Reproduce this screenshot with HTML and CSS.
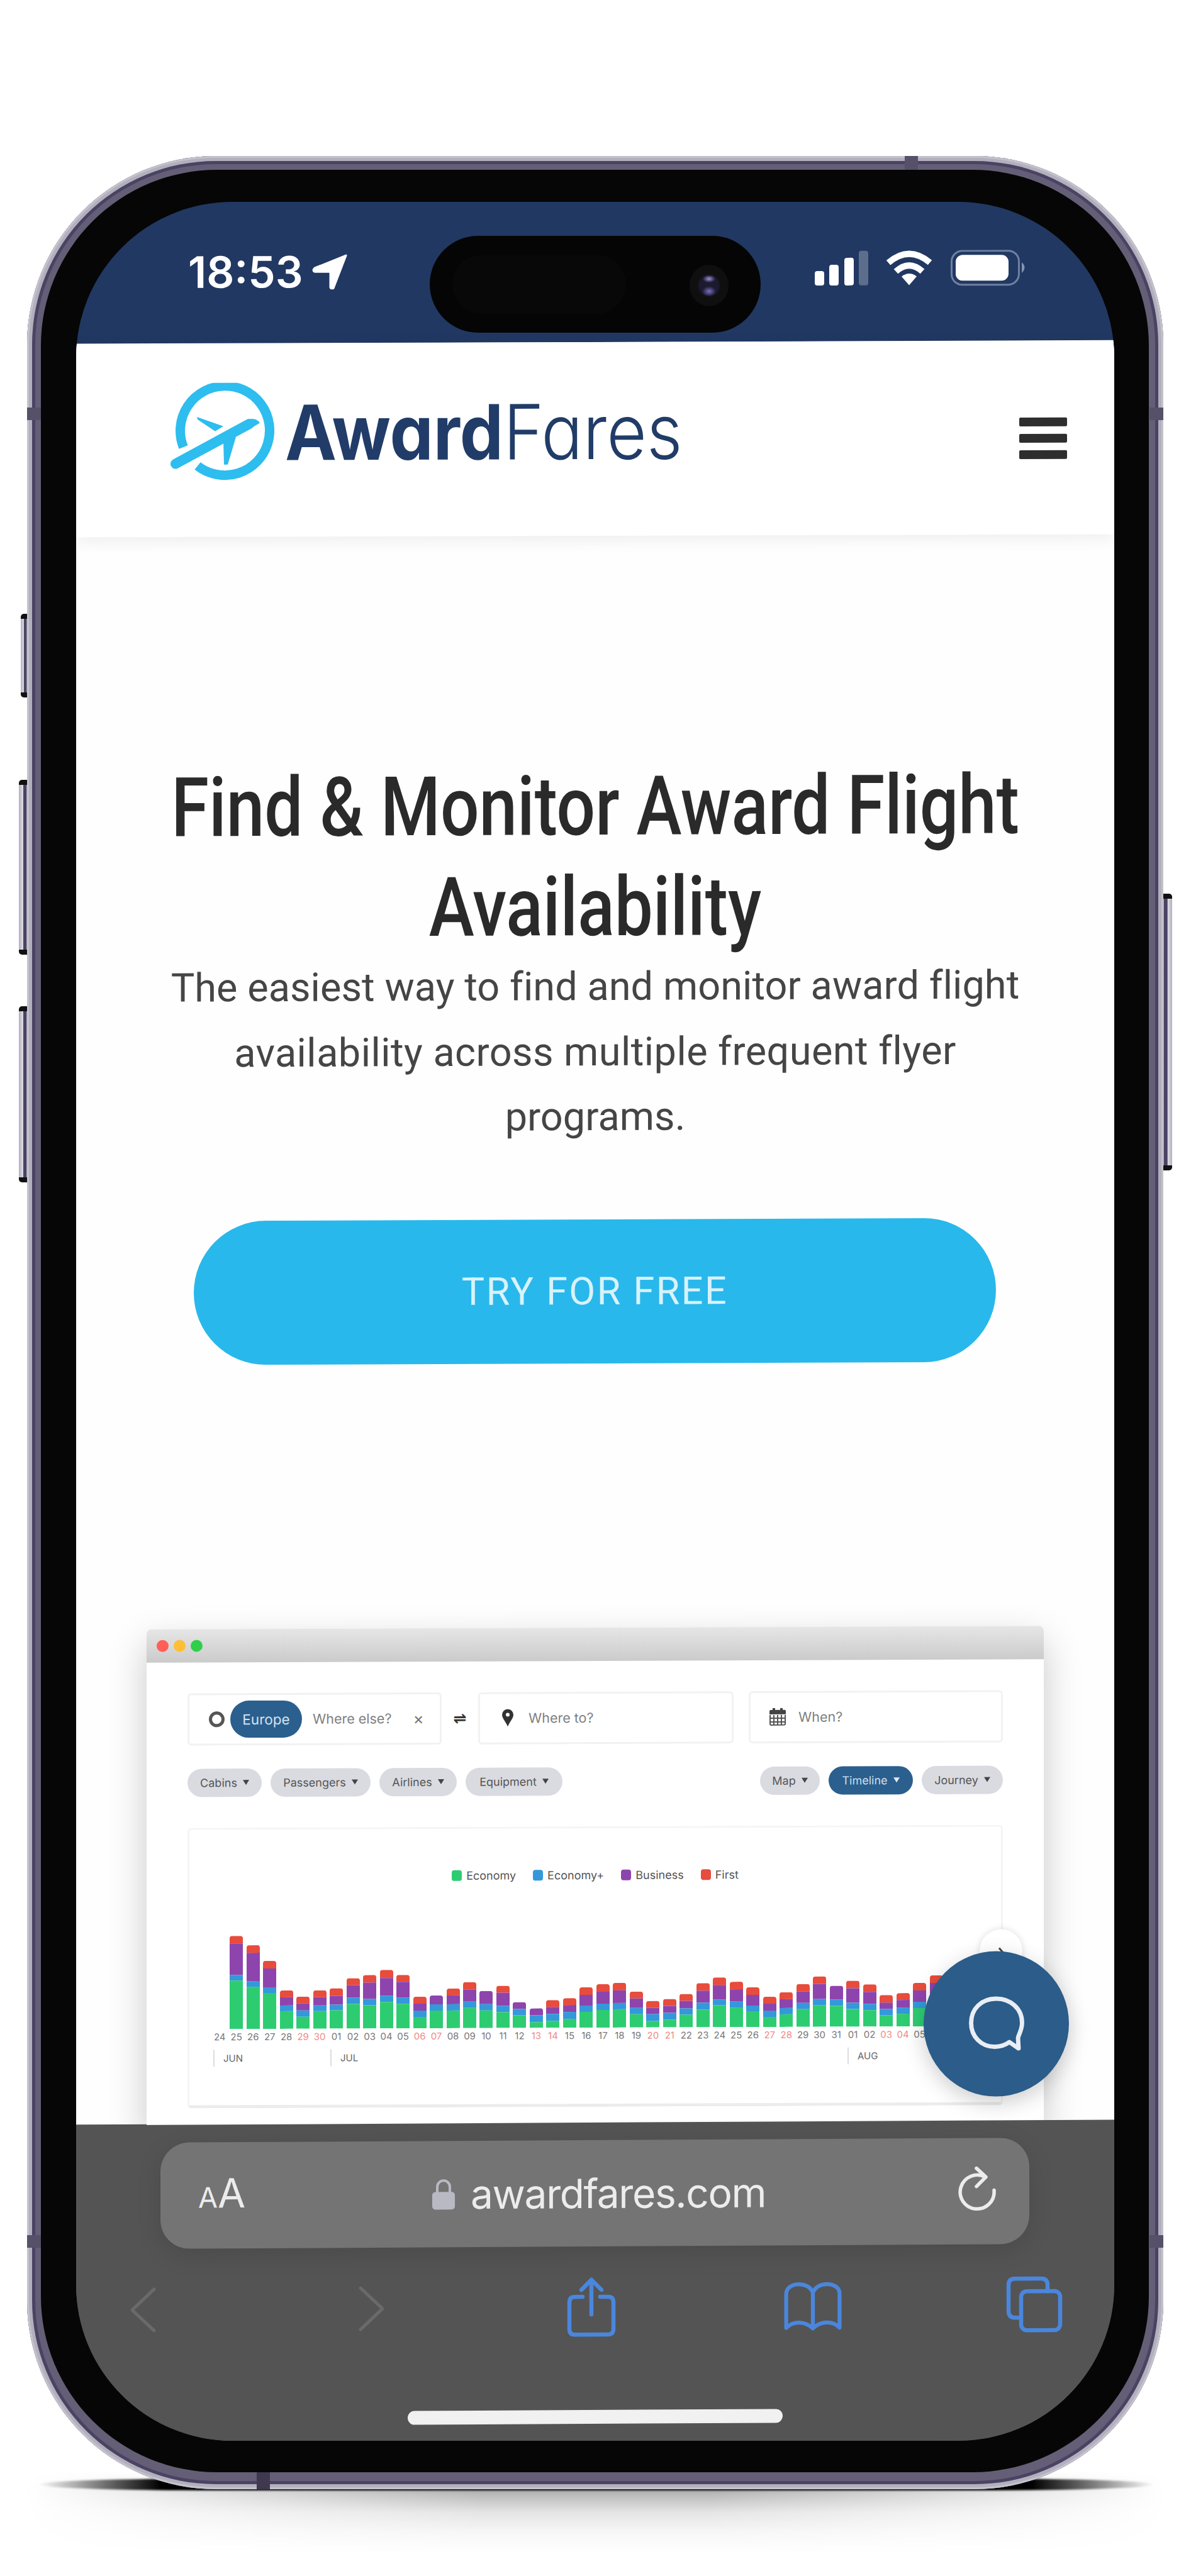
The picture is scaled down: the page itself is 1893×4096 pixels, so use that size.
FILE: index.html
```html
<!DOCTYPE html>
<html lang="en">
<head>
<meta charset="utf-8">
<title>AwardFares</title>
<link rel="stylesheet" href="styles.css">
</head>
<body>
<div class="ground"></div>
<div class="contact"></div>
<div class="phone">
  <i class="key key-mute"></i><i class="key key-up"></i><i class="key key-down"></i><i class="key key-power"></i>
  <i class="band band-l1"></i><i class="band band-r1"></i><i class="band band-l2"></i><i class="band band-r2"></i><i class="band band-top"></i><i class="band band-bottom"></i>
  <div class="bezel">
    <div class="screen">
      <section class="status">
        <div class="clock"><span class="time">18:53</span>
          <svg class="arrow" viewBox="0 0 56 56"><path d="M54 2 34 54q-3 3-5-1V28H4q-4-2 0-6Z" fill="#fff" stroke="#fff" stroke-width="3" stroke-linejoin="round"/></svg>
        </div>
        <svg class="signals" viewBox="0 0 340 58">
          <g fill="#fff"><rect x="1" y="33" width="15" height="23" rx="4"/><rect x="24" y="23" width="15" height="33" rx="4"/><rect x="48" y="12" width="15" height="44" rx="4"/><rect x="71" y="1" width="15" height="55" rx="4" opacity=".27"/></g>
          <g fill="none" stroke="#fff" stroke-width="10"><path d="M118 20Q151-8 184 20"/><path d="M130 34Q151 15 172 34"/></g>
          <path d="M139 42Q151 33 163 42L151 56Z" fill="#fff"/>
          <rect x="218.500" y="1.500" width="107" height="54" rx="17" fill="none" stroke="#6f80a1" stroke-width="3"/>
          <rect x="225" y="8" width="84" height="41" rx="11" fill="#fff"/>
          <path d="M330 20q9 8 0 17Z" fill="#8594b0"/>
        </svg>
      </section>
      <div class="island"><i class="sensor"></i><i class="lens"></i></div>
      <main class="page">
        <header class="site-head">
          <div class="brand">
            <svg class="brand-mark" viewBox="0 0 170 160">
              <path d="M21.500 102A71 71 0 1 1 44 132" fill="none" stroke="#2dbdee" stroke-width="15"/>
              <path d="M9 128.500 126 65.500" stroke="#2dbdee" stroke-width="16" stroke-linecap="round"/>
              <path d="M122 59Q137 54 143 64L124 75Z" fill="#2dbdee"/>
              <path d="M43 54 85 69 72 77 44 58ZM85 92 105 86 92 130 86 130Z" fill="#2dbdee"/>
            </svg>
            <span class="word"><b>Award</b><span class="thin">Fares</span></span>
          </div>
          <div class="menu"><i></i><i></i><i></i></div>
        </header>
        <div class="hero">
          <h1>Find &amp; Monitor Award Flight<br>Availability</h1>
          <p>The easiest way to find and monitor award flight<br><span class="line-2">availability across multiple frequent flyer</span><br>programs.</p>
          <a class="cta">TRY FOR FREE</a>
        </div>
        <div class="window">
          <div class="titlebar"><i></i><i></i><i></i></div>
          <div class="app">
            <div class="fields">
              <div class="field"><i class="ring"></i><span class="tag">Europe</span><span class="hint else">Where else?</span><span class="clear">×</span></div>
              <span class="swap">⇌</span>
              <div class="field to"><svg class="pin" viewBox="0 0 18 28"><path d="M9 0a9 9 0 0 1 9 9c0 6-6 11-9 19C6 20 0 15 0 9a9 9 0 0 1 9-9Z" fill="#333"/><circle cx="9" cy="9" r="3" fill="#fff"/></svg><span class="hint">Where to?</span></div>
              <div class="field when"><svg class="cal" viewBox="0 0 26 28"><path d="M2 3h22q2 0 2 2v5H0V5q0-2 2-2ZM5 0h4v6H5zM17 0h4v6h-4z" fill="#444"/><path d="M1 11v14q0 2 2 2h20q2 0 2-2V11M7 11v16M13 11v16M19 11v16M1 16h24M1 22h24" fill="none" stroke="#555" stroke-width="2"/></svg><span class="hint">When?</span></div>
            </div>
            <div class="chips">
              <span class="chip c1">Cabins<i></i></span><span class="chip c2">Passengers<i></i></span><span class="chip c3">Airlines<i></i></span><span class="chip c4">Equipment<i></i></span>
              <span class="chip c5">Map<i></i></span><span class="chip c6 on">Timeline<i></i></span><span class="chip c7">Journey<i></i></span>
            </div>
            <div class="chart">
              <div class="legend"><span class="eco">Economy</span><span class="plus">Economy+</span><span class="biz">Business</span><span class="first">First</span></div>
              <div class="days" id="days"></div>
              <div class="months"><span class="m6">JUN</span><span class="m7">JUL</span><span class="m8">AUG</span></div>
              <div class="next"><svg viewBox="0 0 12 20"><path d="M3 2l7 8-7 8" fill="none" stroke="#444" stroke-width="3"/></svg></div>
            </div>
          </div>
        </div>
        <div class="chat"><svg viewBox="0 0 100 100"><path d="M88 92 72 81C64 87 57 89 47 89 23 89 6 71 6 48 6 23 24 6 49 6s45 17 45 42c0 12-6 20-7 26Z" fill="none" stroke="#e9eef4" stroke-width="7.500" stroke-linejoin="round"/></svg></div>
      </main>
      <footer class="browser">
        <div class="urlbar">
          <span class="aa"><small>A</small>A</span>
          <span class="address"><svg class="lock" viewBox="0 0 36 50"><rect y="21" width="36" height="28" rx="5" fill="#b9b9c3"/><path d="M8 22V13a10 10 0 0 1 20 0v9" fill="none" stroke="#b9b9c3" stroke-width="4"/></svg><span class="host">awardfares.com</span></span>
          <svg class="reload" viewBox="0 0 64 72"><path d="M58 38A27 27 0 1 1 44 17" fill="none" stroke="#ececec" stroke-width="5.500" stroke-linecap="round"/><path d="M30 3 45 17 30 32" fill="none" stroke="#ececec" stroke-width="5.500" stroke-linecap="round" stroke-linejoin="round"/></svg>
        </div>
        <nav class="tools">
          <svg class="t-back" viewBox="0 0 42 72"><path d="M39 3 4 36 39 69"/></svg>
          <svg class="t-fwd" viewBox="0 0 42 72"><path d="M3 3 38 36 3 69"/></svg>
          <svg class="t-share" viewBox="0 0 78 96"><path d="M25 32H12q-8 0-8 9v42q0 9 8 9h54q8 0 8-9V41q0-9-8-9H53M39 60V5M23 21 39 5 55 21"/></svg>
          <svg class="t-book" viewBox="0 0 96 82"><path d="M48 77V18C44 8 34 4 25 4 15 4 4 9 4 20V76C16 64 35 65 48 77 61 65 80 64 92 76V20C92 9 81 4 71 4 62 4 52 8 48 18"/></svg>
          <svg class="t-tabs" viewBox="0 0 90 90"><rect x="24" y="24" width="62" height="62" rx="9"/><path d="M24 66H14Q4 66 4 55V14Q4 4 14 4H55Q66 4 66 14V24"/></svg>
        </nav>
        <i class="home"></i>
      </footer>
    </div>
  </div>
</div>
<script src="chart.js"></script>
</body>
</html>
```
FILE: styles.css
```css
* { box-sizing: border-box; }
body { margin: 0; width: 1893px; height: 4096px; overflow: hidden; background: #fff; position: relative; font-family: Inter, "Liberation Sans", sans-serif; }
i { display: block; font-style: normal; }
svg { display: block; flex: none; }

/* Floor shadow */
.ground { position: absolute; left: 40px; top: 3930px; width: 1813px; height: 130px;
  background: linear-gradient(rgba(0,0,0,0), rgba(0,0,0,.3) 24%, rgba(0,0,0,.1) 50%, rgba(0,0,0,.03) 75%, rgba(0,0,0,0));
  -webkit-mask-image: linear-gradient(90deg, transparent, #000 40% 60%, transparent); mask-image: linear-gradient(90deg, transparent, #000 40% 60%, transparent); }
.contact { position: absolute; left: 60px; top: 3941px; width: 1775px; height: 19px; background: linear-gradient(90deg, transparent, #000 11% 89%, transparent); filter: blur(1.500px); border-radius: 300px / 10px; }

/* Phone body */
.phone { position: relative; width: 1806px; height: 3710px; margin: 248px 0 0 43px; padding: 22px 23px 27px 22px; border-radius: 300px;
  background: #645e76; box-shadow: inset 0 0 0 3px #c4c2cc, inset 0 0 0 8px #b3b0bd, inset 0 0 0 13px #4a4364; }
.bezel { height: 100%; padding: 51px 55px 50px 56px; border-radius: 280px; background: #060606; }
.screen { position: relative; width: 1650px; height: 3560px; border-radius: 248px; overflow: hidden; background: linear-gradient(#213862 50%, #545454 50%); }
.key { position: absolute; background: linear-gradient(90deg, #b3b0bd, #dddbe4 50%, #4a4364 55% 90%, #dddbe4); border-top: 8px solid #111; border-bottom: 8px solid #111; border-radius: 5px 0 0 5px; }
.key-mute { left: -10px; top: 728px; width: 10px; height: 133px; }
.key-up { left: -13px; top: 992px; width: 13px; height: 278px; }
.key-down { left: -13px; top: 1352px; width: 13px; height: 280px; }
.key-power { right: -14px; top: 1173px; width: 14px; height: 440px; transform: scaleX(-1); }
.band { position: absolute; background: #575069; }
.band-l1, .band-r1 { top: 400px; height: 20px; width: 22px; }
.band-l2, .band-r2 { top: 3306px; height: 20px; width: 22px; }
.band-l1, .band-l2 { left: 0; }
.band-r1, .band-r2 { right: 0; }
.band-top { left: 1395px; top: 0; width: 21px; height: 22px; }
.band-bottom { left: 365px; bottom: 0; width: 21px; height: 27px; background: #3f384f; }

/* Status bar */
.status { height: 223px; padding: 0 137px 0 178px; display: flex; justify-content: space-between; transform: skewY(-.16deg); color: #fff; }
.clock { display: flex; align-items: flex-start; padding-top: 70px; }
.time { font-size: 69px; line-height: 80px; font-weight: 600; white-space: nowrap; }
.arrow { width: 56px; height: 56px; margin: 12px 0 0 14px; }
.signals { width: 340px; height: 58px; margin-top: 78px; }
.island { position: absolute; z-index: 2; left: 562px; top: 54px; width: 526px; height: 154px; border-radius: 77px; background: #050505; }
.sensor { position: absolute; left: 36px; top: 30px; width: 276px; height: 94px; border-radius: 47px; background: #080808; }
.lens { position: absolute; left: 413px; top: 46px; width: 62px; height: 66px; border-radius: 50%; background: radial-gradient(ellipse 10px 6px at 50% 34%, #9a92d8, transparent), radial-gradient(ellipse 11px 8px at 50% 64%, #7a70c0, transparent), radial-gradient(circle, #1b1a30 0 32%, #0f0f0f 42%); }

/* Page */
.page { position: relative; height: 2831px; background: #fefefe; transform: skewY(-.22deg); }
.site-head { height: 308px; padding: 0 75px 0 149px; display: flex; justify-content: space-between; background: #fff; box-shadow: 0 6px 26px rgba(0,0,0,.07); transform: skewY(.05deg); }
.brand { display: flex; }
.brand-mark { width: 170px; height: 160px; margin-top: 63px; }
.word { margin-left: 13px; padding-top: 69px; font-size: 121px; line-height: 146px; color: #213c68; white-space: nowrap; font-feature-settings: "cv11"; transform: scaleX(.908); transform-origin: 0 0; }
.word b { font-weight: 700; }
.word .thin { font-weight: 300; }
.menu { width: 76px; padding-top: 122px; display: flex; flex-direction: column; gap: 12px; }
.menu i { height: 14px; border-radius: 2px; background: #2e2e2e; }
.hero { padding-top: 350px; text-align: center; font-family: Roboto, sans-serif; white-space: nowrap; }
h1 { margin: 0; font-size: 131px; line-height: 160px; font-weight: 500; color: #2a2a2a; transform: scaleX(.829); }
.hero p { margin: -5px 0 0; font-size: 63px; line-height: 103.500px; letter-spacing: .06px; color: #454545; }
.line-2 { letter-spacing: .45px; }
.cta { display: flex; align-items: center; justify-content: center; width: 1275px; height: 229px; margin: 111px 0 0 187px; border-radius: 115px; background: #29b8eb; color: #d8f2fc; font-size: 61px; font-weight: 400; letter-spacing: 2.500px; }

/* Product window */
.window { width: 1426px; margin: 420px 0 0 112px; border-radius: 8px 8px 0 0; background: #fff; box-shadow: 0 24px 60px rgba(0,0,0,.22); }
.titlebar { height: 53px; padding: 0 0 0 16px; display: flex; align-items: center; gap: 8px; border-radius: 8px 8px 0 0; background: linear-gradient(#e6e6e6, #cbcbcb); }
.titlebar i { width: 19px; height: 19px; border-radius: 50%; background: #ff5f57; }
.titlebar i:nth-child(2) { background: #fdbf38; }
.titlebar i:nth-child(3) { background: #2fcf49; }
.app { height: 740px; padding: 49px 65px 0; color: #555; }
.fields { display: grid; grid-template-columns: 404px 58px 406px 404px; column-gap: 0; justify-content: start; }
.field { height: 83px; display: flex; align-items: center; border: 3px solid #f2f2f2; border-radius: 6px; font-size: 26px; white-space: nowrap; }
.when { margin-left: 24px; width: 404px; }
.ring { width: 25px; height: 25px; margin-left: 31px; border: 5px solid #555; border-radius: 50%; }
.tag { width: 114px; height: 59px; margin-left: 9px; border-radius: 30px; background: #2b5f8e; color: #d5e2ee; font-size: 22.500px; line-height: 59px; text-align: center; }
.hint { color: #808080; font-size: 21.500px; }
.else { margin-left: 17px; }
.clear { margin-left: 34px; color: #777; }
.swap { align-self: center; text-align: center; font-size: 25px; font-weight: 700; color: #333; font-family: "DejaVu Sans", sans-serif; }
.pin { width: 18px; height: 28px; margin: 0 24px 0 35px; }
.cal { width: 26px; height: 28px; margin: 0 20px 0 30px; }
.chips { display: flex; gap: 14px; margin-top: 37px; }
.chip { height: 45px; border-radius: 23px; background: #dadbe1; color: #555; font-size: 18px; display: flex; align-items: center; justify-content: center; gap: 9px; }
.chip i { border: 5px solid transparent; border-top: 8px solid #444; border-bottom: 0; }
.chip.on { background: #2b5f8e; color: #cfdeec; }
.chip.on i { border-top-color: #dfe9f2; }
.c1 { width: 118px; } .c2 { width: 159px; } .c3 { width: 123px; } .c4 { width: 154px; }
.c5 { width: 95px; margin-left: auto; } .c6 { width: 134px; } .c7 { width: 129px; }
.chart { position: relative; height: 446px; margin-top: 49px; padding: 65px 0 0 38px; border: 3px solid #f5f5f5; border-bottom: 5px solid #ececec; border-radius: 6px; }
.legend { display: flex; justify-content: center; gap: 27px; height: 20px; margin-left: -38px; font-size: 18px; line-height: 20px; color: #555; }
.legend span { display: flex; align-items: center; gap: 7px; }
.legend span::before { content: ""; width: 16px; height: 17px; border-radius: 4px; background: #2ecc71; }
.legend .plus::before { background: #3498db; }
.legend .biz::before { background: #8e44ad; }
.legend .first::before { background: #e74c3c; }
.days { display: flex; align-items: flex-end; height: 258px; margin-left: -3px; }
.day { flex: none; width: 26.490px; display: flex; flex-direction: column; align-items: center; font-size: 15px; line-height: 26px; color: #777; }
.day.weekend { color: #f08a86; }
.bar { width: 21px; border-radius: 4px 4px 0 0; overflow: hidden; }
.bar .f { background: #e74c3c; } .bar .b { background: #8e44ad; } .bar .p { background: #3498db; } .bar .e { background: #2ecc71; }
.months { position: relative; height: 27px; margin-top: 7px; }
.months span { position: absolute; height: 27px; padding-left: 14px; border-left: 2px solid #ddd; font-size: 15px; line-height: 27px; color: #666; }
.m6 { left: 0; } .m7 { left: 186px; } .m8 { left: 1008px; }
.next { position: absolute; right: -34px; top: 163px; width: 68px; height: 68px; border-radius: 50%; background: #fff; box-shadow: 0 0 12px rgba(0,0,0,.14); display: flex; align-items: center; justify-content: center; }
.next svg { width: 12px; height: 20px; margin-top: 8px; }
.chat { position: absolute; left: 1347px; top: 2561px; width: 231px; height: 231px; border-radius: 50%; background: #2b5c8a; box-shadow: 0 10px 34px rgba(0,0,0,.2); display: flex; align-items: center; justify-content: center; }
.chat svg { width: 96px; height: 92px; }

/* Browser chrome */
.browser { position: relative; height: 506px; padding: 28px 135px 0 134px; background: #545454; transform: skewY(-.32deg); }
.urlbar { height: 169px; padding: 0 50px 0 60px; display: flex; align-items: center; justify-content: space-between; border-radius: 46px; background: #747474; box-shadow: 0 10px 40px rgba(0,0,0,.12); color: #ececec; }
.aa { font-size: 64px; line-height: 80px; white-space: nowrap; }
.aa small { font-size: 45px; }
.address { display: flex; align-items: center; gap: 25px; margin-right: 8px; }
.lock { width: 36px; height: 50px; }
.host { font-size: 64px; line-height: 80px; letter-spacing: -1.400px; }
.reload { width: 64px; height: 72px; margin-top: -8px; }
.tools { position: relative; height: 140px; }
.tools svg { position: absolute; fill: none; stroke: #4a86dc; stroke-width: 6.500; stroke-linejoin: round; stroke-linecap: round; }
.tools .t-back, .tools .t-fwd { width: 42px; height: 72px; stroke: #6a6a6a; stroke-width: 5; }
.t-back { left: -49px; top: 61px; }
.t-fwd { left: 315px; top: 61px; }
.t-share { width: 78px; height: 96px; left: 646px; top: 48px; }
.t-book { width: 96px; height: 79px; left: 989px; top: 58px; }
.t-tabs { width: 90px; height: 90px; left: 1344px; top: 51px; }
.home { position: absolute; left: 527px; top: 457px; width: 596px; height: 22px; border-radius: 11px; background: #f1f1f1; }
```
FILE: chart.js
```js
// Seats per cabin for each day: [first, business, economy plus, economy, weekend], in pixels.
const days = [
  ["24"], ["25",12,50,9,77], ["26",12,45,9,67], ["27",12,30,9,57], ["28",11,13,9,28], ["29",11,11,10,19,1], ["30",11,13,9,28,1],
  ["01",12,14,9,29], ["02",11,20,10,39], ["03",12,26,10,37], ["04",13,28,10,42], ["05",11,25,10,39], ["06",11,11,10,18,1], ["07",0,14,10,28,1],
  ["08",11,14,10,28], ["09",12,19,10,32], ["10",0,21,10,28], ["11",11,21,10,25], ["12",0,11,10,20], ["13",0,11,11,9,1], ["14",11,11,11,11,1],
  ["15",11,11,11,14], ["16",12,17,10,25], ["17",12,19,10,28], ["18",12,20,10,29], ["19",11,15,10,21], ["20",11,10,11,10,1], ["21",11,11,11,12,1],
  ["22",11,12,10,20], ["23",12,19,11,28], ["24",12,23,9,35], ["25",12,19,10,31], ["26",12,17,9,25], ["27",11,11,10,16,1], ["28",11,14,10,20,1],
  ["29",12,18,10,28], ["30",12,24,10,34], ["31",0,22,10,33], ["01",12,23,10,28], ["02",12,19,10,26], ["03",12,10,10,18,1], ["04",11,12,10,20,1],
  ["05",12,18,10,29], ["06",12,25,9,35]
];
document.getElementById("days").innerHTML = days.map(([d, f = 0, b = 0, p = 0, e = 0, weekend]) =>
  `<div class="day${weekend ? " weekend" : ""}"><div class="bar"><div class="f" style="height:${f}px"></div><div class="b" style="height:${b}px"></div><div class="p" style="height:${p}px"></div><div class="e" style="height:${e}px"></div></div>${d}</div>`).join("");
```
